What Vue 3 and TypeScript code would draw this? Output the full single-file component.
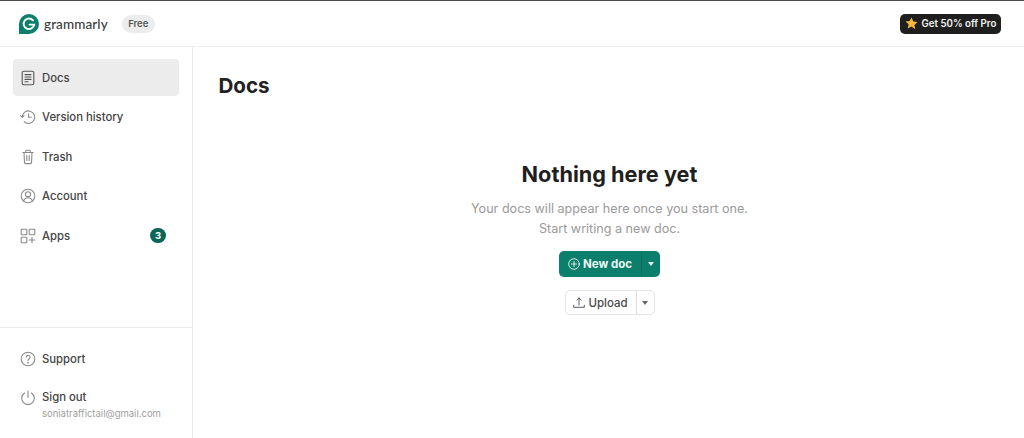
<script setup lang="ts">
const upper = [
  { key: 'docs', label: 'Docs', active: true },
  { key: 'history', label: 'Version history' },
  { key: 'trash', label: 'Trash' },
  { key: 'account', label: 'Account' },
  { key: 'apps', label: 'Apps', badge: '3' },
]
</script>

<template>
  <div class="page">
    <header class="top">
      <div class="brand">
        <svg class="logo" width="20" height="20" viewBox="0 0 20 20">
          <path d="M10 0a10 10 0 0 1 0 20H0V10A10 10 0 0 1 10 0z" fill="#0b7f6c" />
          <path d="M14 6.3A5.3 5.3 0 1 0 15.2 10.6H10.6" fill="none" stroke="#fff" stroke-width="1.9" stroke-linecap="round" />
        </svg>
        <span class="wordmark">grammarly</span>
        <span class="free">Free</span>
      </div>
      <button class="promo">
        <svg width="13" height="13" viewBox="0 0 24 24"><path d="M12 1l3.4 7.2 7.6 1-5.6 5.4 1.5 7.8L12 17.6 5.1 21.4l1.5-7.8L1 8.2l7.6-1z" fill="#f5b83d" /></svg>
        <span>Get 50% off Pro</span>
      </button>
    </header>
    <div class="body">
      <aside class="side">
        <nav class="nav">
          <a v-for="it in upper" :key="it.key" class="item" :class="{ active: it.active }">
            <svg class="ic" width="16" height="16" viewBox="0 0 16 16" fill="none" stroke="currentColor" stroke-width="1.1" stroke-linecap="round" stroke-linejoin="round">
              <template v-if="it.key === 'docs'">
                <rect x="2.2" y="1.2" width="11.6" height="13.6" rx="1.6" />
                <path d="M5 4.6h6M5 7h6M5 9.4h6M5 11.8h3" />
              </template>
              <template v-else-if="it.key === 'history'">
                <path d="M2.3 8a6.2 6.2 0 1 1 1.9 4.6" />
                <path d="M0.6 6.6L2.3 8.4 4 6.6M8.6 4.8v3.5h2.6" />
              </template>
              <template v-else-if="it.key === 'trash'">
                <path d="M2.8 3.5h10.4M5.8 3.3V2a.8.8 0 0 1 .8-.8h2.8a.8.8 0 0 1 .8.8v1.3M4 3.5l.5 10.2a1 1 0 0 0 1 .9h5a1 1 0 0 0 1-.9l.5-10.2M6.8 6.5v5M9.2 6.5v5" />
              </template>
              <template v-else-if="it.key === 'account'">
                <circle cx="8" cy="8" r="6.8" />
                <circle cx="8" cy="6.3" r="2.6" />
                <path d="M3.6 13c.7-2 2.3-3.2 4.4-3.2s3.7 1.2 4.4 3.2" />
              </template>
              <template v-else>
                <rect x="1.2" y="1.2" width="5.6" height="5.6" rx=".8" />
                <rect x="9.2" y="1.2" width="5.6" height="5.6" rx=".8" />
                <rect x="1.2" y="9.2" width="5.6" height="5.6" rx=".8" />
                <path d="M12 9.2v5.6M9.2 12h5.6" />
              </template>
            </svg>
            <span class="lbl">{{ it.label }}</span>
            <span v-if="it.badge" class="badge">{{ it.badge }}</span>
          </a>
        </nav>
        <div class="foot">
          <a class="item">
            <svg class="ic" width="16" height="16" viewBox="0 0 16 16" fill="none" stroke="currentColor" stroke-width="1.1" stroke-linecap="round">
              <circle cx="8" cy="8" r="6.8" />
              <path d="M6.2 6.2a1.9 1.9 0 1 1 2.8 1.7c-.7.4-1 .8-1 1.5" />
              <circle cx="8" cy="11.6" r=".4" />
            </svg>
            <span class="lbl">Support</span>
          </a>
          <a class="item signout">
            <svg class="ic" width="16" height="16" viewBox="0 0 16 16" fill="none" stroke="currentColor" stroke-width="1.1" stroke-linecap="round">
              <path d="M4.6 3a6.3 6.3 0 1 0 6.8 0M8 1v6.5" />
            </svg>
            <span class="stack">
              <span class="lbl">Sign out</span>
              <span class="mail">soniatraffictail@gmail.com</span>
            </span>
          </a>
        </div>
      </aside>
      <main class="main">
        <h1>Docs</h1>
        <section class="empty">
          <h2>Nothing here yet</h2>
          <p>Your docs will appear here once you start one.<br />Start writing a new doc.</p>
          <div class="split primary">
            <button class="sa">
              <svg width="12" height="12" viewBox="0 0 12 12" fill="none" stroke="currentColor" stroke-width=".9" stroke-linecap="round"><circle cx="6" cy="6" r="5.3" /><path d="M6 3.4v5.2M3.4 6h5.2" /></svg>
              New doc
            </button>
            <button class="sb"><i class="caret"></i></button>
          </div>
          <div class="split ghost">
            <button class="sa">
              <svg width="12" height="12" viewBox="0 0 12 12" fill="none" stroke="currentColor" stroke-width=".9" stroke-linecap="round" stroke-linejoin="round"><path d="M6 8V1M3.7 3.2L6 .9l2.3 2.3M.7 8.2v2.1h10.6V8.2" /></svg>
              Upload
            </button>
            <button class="sb"><i class="caret"></i></button>
          </div>
        </section>
      </main>
    </div>
  </div>
</template>

<style scoped>
.page {
  width: 1024px;
  height: 438px;
  display: flex;
  flex-direction: column;
  overflow: hidden;
  background: #fff;
  border-top: 1px solid #4a4a4a;
  box-sizing: border-box;
  font-family: Inter, "Liberation Sans", sans-serif;
  color: #3a3a3a;
}
.top {
  height: 46px;
  flex: none;
  display: flex;
  align-items: center;
  justify-content: space-between;
  padding: 0 23px 0 19px;
  border-bottom: 1px solid #ececec;
  box-sizing: border-box;
}
.brand { display: flex; align-items: center; }
.logo { flex: none; }
.wordmark {
  margin-left: 5px;
  font-family: Lato, Inter, sans-serif;
  font-size: 13.5px;
  font-weight: 500;
  color: #3c3c3c;
  letter-spacing: .1px;
}
.free {
  margin-left: 14px;
  width: 33px;
  height: 18px;
  border-radius: 9px;
  background: #ececec;
  font-size: 9.5px;
  font-weight: 600;
  color: #555;
  display: flex;
  align-items: center;
  justify-content: center;
}
.promo {
  height: 20px;
  width: 101px;
  padding: 0;
  border: 0;
  border-radius: 5px;
  background: #1f1f1f;
  color: #f5f5f5;
  font: 600 9.7px Inter, sans-serif;
  display: flex;
  align-items: center;
  justify-content: center;
  gap: 4px;
}
.body { flex: 1; display: flex; min-height: 0; }
.side {
  width: 193px;
  flex: none;
  box-sizing: border-box;
  border-right: 1px solid #ececec;
  display: flex;
  flex-direction: column;
  justify-content: space-between;
}
.nav {
  padding: 12px 13px 0;
  display: flex;
  flex-direction: column;
  gap: 2.5px;
}
.item {
  height: 37px;
  display: flex;
  align-items: center;
  padding: 0 13px 0 7px;
  border-radius: 4px;
  color: #8a8a8a;
}
.item.active { background: #ececec; color: #555; }
.ic { flex: none; }
.lbl { margin-left: 6px; font-size: 11.3px; font-weight: 500; color: #444; }
.badge {
  margin-left: auto;
  width: 16px;
  height: 15px;
  border-radius: 8px;
  background: #0c6658;
  color: #fff;
  font-size: 9.5px;
  font-weight: 700;
  display: flex;
  align-items: center;
  justify-content: center;
}
.foot {
  border-top: 1px solid #ececec;
  padding: 12px 13px 0;
  height: 111px;
  box-sizing: border-box;
  display: flex;
  flex-direction: column;
  gap: 2.5px;
}
.signout { align-items: flex-start; height: auto; padding-top: 10px; }
.stack { display: flex; flex-direction: column; }
.mail { margin-left: 6px; margin-top: 4px; font-size: 9.5px; color: #a0a0a0; }
.main { flex: 1; padding: 0 26px; min-width: 0; }
h1 {
  margin: 27px 0 0 -0.5px;
  font-size: 20.6px;
  line-height: 24px;
  font-weight: 700;
  color: #222;
}
.empty {
  margin-top: 62px;
  padding-left: 2px;
  display: flex;
  flex-direction: column;
  align-items: center;
}
h2 {
  margin: 0;
  font-size: 21.7px;
  line-height: 28px;
  font-weight: 700;
  color: #1f1f1f;
}
p {
  margin: 11px 0 0;
  text-align: center;
  font-size: 12.6px;
  line-height: 19.5px;
  color: #9a9a9a;
}
.split { display: flex; }
.primary {
  margin-top: 13px;
  width: 101px;
  height: 26px;
  border-radius: 5px;
  background: #0b7f6c;
  color: #e8f3f0;
}
.primary .sa { font-weight: 700; color: #eef7f5; }
.ghost {
  margin-top: 13px;
  width: 90px;
  height: 25px;
  box-sizing: border-box;
  border: 1px solid #e4e4e4;
  border-radius: 5px;
  color: #666;
}
.ghost .sa { font-weight: 500; color: #4a4a4a; }
button.sa, button.sb {
  padding: 0;
  border: 0;
  background: none;
  color: inherit;
  display: flex;
  align-items: center;
  justify-content: center;
  font-family: Inter, sans-serif;
}
button.sa { flex: 1; gap: 3px; font-size: 11.5px; }
button.sb { flex: none; }
.primary .sb { border-left: 1px solid #0a6f5f; width: 19px; }
.ghost .sb { border-left: 1px solid #dedede; width: 18px; }
.caret {
  width: 0;
  height: 0;
  border-left: 3.5px solid transparent;
  border-right: 3.5px solid transparent;
  border-top: 4px solid currentColor;
}
</style>
